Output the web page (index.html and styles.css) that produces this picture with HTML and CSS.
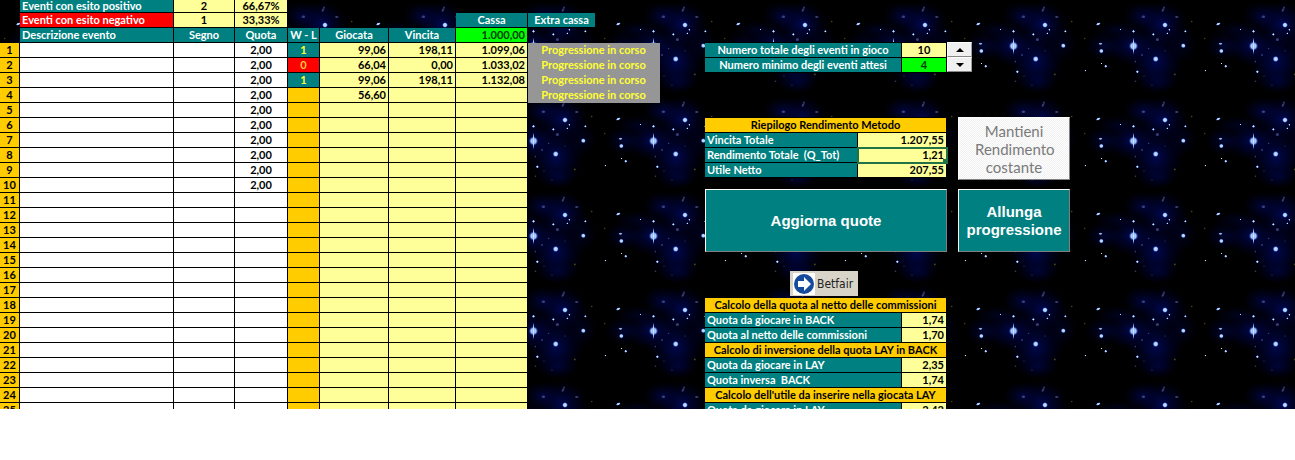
FILE: index.html
```
<!DOCTYPE html>
<html lang="it">
<head>
    <meta charset="UTF-8">
    <meta name="viewport" content="width=device-width, initial-scale=1.0">
    <title>Progressione - Eventi in gioco</title>
    <link rel="stylesheet" href="styles.css">
</head>
<body>
    <main class="sheet">
        <table class="events">
            <colgroup>
                <col class="col-num">
                <col class="col-desc">
                <col class="col-sign">
                <col class="col-odds">
                <col class="col-wl">
                <col class="col-stake">
                <col class="col-win">
                <col class="col-cash">
                <col class="col-extra">
                <col class="col-rest">
            </colgroup>
            <thead>
                <tr class="first">
                    <td class="clear"></td>
                    <th class="teal left">Eventi con esito positivo</th>
                    <td class="yellow">2</td>
                    <td class="yellow">66,67%</td>
                </tr>
                <tr>
                    <td class="clear"></td>
                    <th class="red left">Eventi con esito negativo</th>
                    <td class="yellow">1</td>
                    <td class="yellow">33,33%</td>
                    <td class="clear" colspan="3"></td>
                    <th class="teal">Cassa</th>
                    <th class="teal">Extra cassa</th>
                </tr>
                <tr>
                    <td class="clear"></td>
                    <th class="teal left">Descrizione evento</th>
                    <th class="teal">Segno</th>
                    <th class="teal">Quota</th>
                    <th class="teal">W - L</th>
                    <th class="teal">Giocata</th>
                    <th class="teal">Vincita</th>
                    <td class="green right">1.000,00</td>
                </tr>
            </thead>
            <tbody>
                <tr><th>1</th><td></td><td></td><td>2,00</td><td class="won">1</td><td>99,06</td><td>198,11</td><td>1.099,06</td><td class="status" colspan="2">Progressione in corso</td></tr>
                <tr><th>2</th><td></td><td></td><td>2,00</td><td class="lost">0</td><td>66,04</td><td>0,00</td><td>1.033,02</td><td class="status" colspan="2">Progressione in corso</td></tr>
                <tr><th>3</th><td></td><td></td><td>2,00</td><td class="won">1</td><td>99,06</td><td>198,11</td><td>1.132,08</td><td class="status" colspan="2">Progressione in corso</td></tr>
                <tr><th>4</th><td></td><td></td><td>2,00</td><td></td><td>56,60</td><td></td><td></td><td class="status" colspan="2">Progressione in corso</td></tr>
                <tr><th>5</th><td></td><td></td><td>2,00</td><td></td><td></td><td></td><td></td></tr>
                <tr><th>6</th><td></td><td></td><td>2,00</td><td></td><td></td><td></td><td></td></tr>
                <tr><th>7</th><td></td><td></td><td>2,00</td><td></td><td></td><td></td><td></td></tr>
                <tr><th>8</th><td></td><td></td><td>2,00</td><td></td><td></td><td></td><td></td></tr>
                <tr><th>9</th><td></td><td></td><td>2,00</td><td></td><td></td><td></td><td></td></tr>
                <tr><th>10</th><td></td><td></td><td>2,00</td><td></td><td></td><td></td><td></td></tr>
                <tr><th>11</th><td></td><td></td><td></td><td></td><td></td><td></td><td></td></tr>
                <tr><th>12</th><td></td><td></td><td></td><td></td><td></td><td></td><td></td></tr>
                <tr><th>13</th><td></td><td></td><td></td><td></td><td></td><td></td><td></td></tr>
                <tr><th>14</th><td></td><td></td><td></td><td></td><td></td><td></td><td></td></tr>
                <tr><th>15</th><td></td><td></td><td></td><td></td><td></td><td></td><td></td></tr>
                <tr><th>16</th><td></td><td></td><td></td><td></td><td></td><td></td><td></td></tr>
                <tr><th>17</th><td></td><td></td><td></td><td></td><td></td><td></td><td></td></tr>
                <tr><th>18</th><td></td><td></td><td></td><td></td><td></td><td></td><td></td></tr>
                <tr><th>19</th><td></td><td></td><td></td><td></td><td></td><td></td><td></td></tr>
                <tr><th>20</th><td></td><td></td><td></td><td></td><td></td><td></td><td></td></tr>
                <tr><th>21</th><td></td><td></td><td></td><td></td><td></td><td></td><td></td></tr>
                <tr><th>22</th><td></td><td></td><td></td><td></td><td></td><td></td><td></td></tr>
                <tr><th>23</th><td></td><td></td><td></td><td></td><td></td><td></td><td></td></tr>
                <tr><th>24</th><td></td><td></td><td></td><td></td><td></td><td></td><td></td></tr>
                <tr><th>25</th><td></td><td></td><td></td><td></td><td></td><td></td><td></td></tr>
            </tbody>
        </table>

        <section class="panel">
            <div class="counts">
                <table class="box">
                    <colgroup><col><col class="short"></colgroup>
                    <tr><th class="teal center">Numero totale degli eventi in gioco</th><td class="yellow center">10</td></tr>
                    <tr><th class="teal center">Numero minimo degli eventi attesi</th><td class="green center">4</td></tr>
                </table>
                <div class="spinner">
                    <button type="button" aria-label="Aumenta">
                        <svg width="8" height="4" viewBox="0 0 8 4"><path d="M4 0 L8 4 H0 Z"/></svg>
                    </button>
                    <button type="button" aria-label="Diminuisci">
                        <svg width="8" height="4" viewBox="0 0 8 4"><path d="M0 0 H8 L4 4 Z"/></svg>
                    </button>
                </div>
            </div>

            <div class="actions">
                <table class="box summary">
                    <colgroup><col><col class="long"></colgroup>
                    <tr><th class="gold" colspan="2">Riepilogo Rendimento Metodo</th></tr>
                    <tr><th class="teal">Vincita Totale</th><td class="yellow">1.207,55</td></tr>
                    <tr><th class="teal">Rendimento Totale&nbsp; (Q_Tot)</th><td class="yellow selected">1,21</td></tr>
                    <tr><th class="teal">Utile Netto</th><td class="yellow">207,55</td></tr>
                </table>
                <button type="button" class="btn btn-light">Mantieni Rendimento costante</button>
                <button type="button" class="btn">Aggiorna quote</button>
                <button type="button" class="btn">Allunga progressione</button>
            </div>

            <button type="button" class="betfair">
                <svg width="22" height="22" viewBox="0 0 22 22">
                    <rect width="22" height="22" fill="#fff"/>
                    <circle cx="11" cy="11" r="10" fill="#164a9c"/>
                    <path d="M5 8 H11 V4 L18 11 L11 18 V14 H5 Z" fill="#fff"/>
                </svg>
                Betfair
            </button>

            <table class="box">
                <colgroup><col><col class="short"></colgroup>
                <tr><th class="gold" colspan="2">Calcolo della quota al netto delle commissioni</th></tr>
                <tr><th class="teal">Quota da giocare in BACK</th><td class="yellow">1,74</td></tr>
                <tr><th class="teal">Quota al netto delle commissioni</th><td class="yellow">1,70</td></tr>
                <tr><th class="gold" colspan="2">Calcolo di inversione della quota LAY in BACK</th></tr>
                <tr><th class="teal">Quota da giocare in LAY</th><td class="yellow">2,35</td></tr>
                <tr><th class="teal">Quota inversa&nbsp; BACK</th><td class="yellow">1,74</td></tr>
                <tr><th class="gold" colspan="2">Calcolo dell'utile da inserire nella giocata LAY</th></tr>
                <tr><th class="teal">Quota da giocare in LAY</th><td class="yellow">2,42</td></tr>
            </table>
        </section>
    </main>
</body>
</html>
```
FILE: styles.css
```
* {
    margin: 0;
    padding: 0;
    box-sizing: border-box;
}

body {
    background: #fff;
    color: #000;
    font-family: Lato, "Open Sans", sans-serif;
    font-size: 11px;
    font-weight: bold;
    line-height: 14px;
}

/* night sky, repeated behind the whole sheet */
.sheet {
    display: flex;
    align-items: flex-start;
    max-height: 409px;
    overflow: hidden;
    background-color: #000;
    background-image: url("data:image/svg+xml,%3Csvg xmlns='http://www.w3.org/2000/svg' width='120' height='95'%3E%3Cdefs%3E%3CradialGradient id='n'%3E%3Cstop offset='0' stop-color='%23000a68' stop-opacity='.75'/%3E%3Cstop offset='.5' stop-color='%23000550' stop-opacity='.4'/%3E%3Cstop offset='1' stop-color='%23000030' stop-opacity='0'/%3E%3C/radialGradient%3E%3CradialGradient id='s'%3E%3Cstop offset='0' stop-color='%23d4eaff'/%3E%3Cstop offset='.55' stop-color='%239cc4ff'/%3E%3Cstop offset='1' stop-color='%232038c0' stop-opacity='0'/%3E%3C/radialGradient%3E%3C/defs%3E%3Cg fill='url(%23n)'%3E%3Cellipse cx='76' cy='62' rx='28' ry='32'/%3E%3Cellipse cx='82' cy='24' rx='26' ry='24'/%3E%3Cellipse cx='52' cy='46' rx='26' ry='20'/%3E%3Cellipse cx='62' cy='16' rx='20' ry='15' opacity='.7'/%3E%3Cellipse cx='24' cy='46' rx='20' ry='15' opacity='.6'/%3E%3Cellipse cx='38' cy='30' rx='26' ry='10' opacity='.4'/%3E%3Cellipse cx='102' cy='44' rx='16' ry='20' opacity='.4'/%3E%3Cellipse cx='78' cy='82' rx='20' ry='12' opacity='.5'/%3E%3C/g%3E%3Cg fill='url(%23s)'%3E%3Ccircle cx='53.5' cy='46' r='4.8'/%3E%3Cellipse cx='53.5' cy='46' rx='1.2' ry='9'/%3E%3Ccircle cx='75.7' cy='59' r='3.2'/%3E%3Ccircle cx='85' cy='25' r='3'/%3E%3Ccircle cx='103.3' cy='45.7' r='2.6'/%3E%3Cellipse cx='18.3' cy='24' rx='2.8' ry='1.5' transform='rotate(-25 18.3 24)'/%3E%3Cellipse cx='20.5' cy='43.7' rx='2.3' ry='1.4' opacity='.8'/%3E%3Ccircle cx='21.3' cy='51' r='2.5'/%3E%3Ccircle cx='25.7' cy='66.3' r='1.6'/%3E%3Ccircle cx='53.5' cy='31.4' r='1.6'/%3E%3Ccircle cx='73.4' cy='34.4' r='1.5'/%3E%3Ccircle cx='57.4' cy='71.7' r='1.6'/%3E%3Ccircle cx='105.4' cy='31.4' r='1.4'/%3E%3Ccircle cx='89.4' cy='29.7' r='1.2'/%3E%3Ccircle cx='87.4' cy='33.4' r='1.2'/%3E%3Ccircle cx='21.5' cy='63.5' r='.8'/%3E%3Ccircle cx='40.4' cy='29.4' r='.9'/%3E%3Ccircle cx='5.4' cy='70.6' r='1.1'/%3E%3C/g%3E%3Cg fill='%237078d0' opacity='.5'%3E%3Cellipse cx='63.4' cy='16.7' rx='1.7' ry='1.2'/%3E%3Cellipse cx='96.7' cy='17' rx='1.7' ry='1'/%3E%3Cellipse cx='83' cy='10' rx='1' ry='2' transform='rotate(30 83 10)'/%3E%3Ccircle cx='84' cy='7.5' r='.9'/%3E%3Ccircle cx='77.4' cy='39.4' r='1.5'/%3E%3Ccircle cx='62' cy='55' r='.9'/%3E%3Ccircle cx='68.6' cy='48.4' r='.7'/%3E%3Ccircle cx='55.4' cy='61.6' r='.8'/%3E%3Ccircle cx='85' cy='51' r='.6'/%3E%3Ccircle cx='55.5' cy='81.3' r='.8'/%3E%3Ccircle cx='64' cy='76' r='.6'/%3E%3Ccircle cx='72' cy='85' r='.6'/%3E%3C/g%3E%3Cg fill='%23807828' opacity='.6'%3E%3Ccircle cx='111.7' cy='21.5' r='.8'/%3E%3Ccircle cx='4.7' cy='38.5' r='.7'/%3E%3Ccircle cx='94.8' cy='74.4' r='.9'/%3E%3C/g%3E%3C/svg%3E");
}

table {
    border-collapse: separate;
    border-spacing: 0;
    table-layout: fixed;
}

th,
td {
    height: 15px;
    border-right: 1px solid #000;
    border-bottom: 1px solid #000;
    white-space: nowrap;
}

/* cell colours */
.teal {
    background: #008080;
    color: #fff;
}

.red {
    background: #f00;
    color: #fff;
}

.yellow {
    background: #ff9;
}

.green {
    background: #0f0;
    color: #063c06;
}

.gold {
    background: #fc0;
}

.clear {
    border-color: transparent;
}

/* events table */
.events {
    flex: none;
    width: 660px;
    text-align: center;
}

.col-num { width: 20px; }
.col-desc { width: 154px; }
.col-sign { width: 61px; }
.col-odds { width: 53px; }
.col-wl { width: 32px; }
.col-stake { width: 69px; }
.col-win { width: 67px; }
.col-cash { width: 72px; }
.col-extra { width: 68px; }
.col-rest { width: 64px; }

.events .first th,
.events .first td {
    height: 13px;
    line-height: 12px;
}

.events .left {
    padding-left: 2px;
    text-align: left;
}

.events .right {
    padding-right: 2px;
    text-align: right;
}

.events tbody th,
.events tbody td:nth-child(5) {
    background: #fc0;
}

.events tbody td:nth-child(2),
.events tbody td:nth-child(3),
.events tbody td:nth-child(4) {
    background: #fff;
}

.events tbody td:nth-child(n+6) {
    padding-right: 2px;
    background: #ff9;
    text-align: right;
}

.events tbody .won:nth-child(5) {
    background: #008080;
    color: #ff3;
}

.events tbody .lost:nth-child(5) {
    background: #f00;
    color: #fc3;
}

.events tbody .status:nth-child(9) {
    padding: 0;
    background: #969696;
    border-color: #969696;
    color: #ff3;
    text-align: center;
}

/* right side */
.panel {
    flex: none;
    margin-left: 45px;
    padding-top: 42px;
}

.counts {
    display: flex;
    align-items: flex-start;
    margin-bottom: 44px;
}

.box {
    width: 242px;
    text-align: right;
}

.box th {
    padding-left: 2px;
    text-align: left;
}

.box td {
    padding-right: 2px;
}

.box .gold,
.box .center {
    padding: 0;
    text-align: center;
}

.short {
    width: 45px;
}

.long {
    width: 89px;
}

.counts .box,
.summary {
    border-top: 1px solid #000;
}

.spinner {
    display: flex;
    flex-direction: column;
}

.spinner button {
    display: flex;
    align-items: center;
    justify-content: center;
    width: 25px;
    height: 15px;
    background: #f0f0f0;
    border: 1px solid;
    border-color: #fff #a0a0a0 #888 #fff;
}

/* active cell with its fill handle */
.selected {
    position: relative;
    outline: 2px solid #217346;
    outline-offset: -1px;
}

.selected::after {
    content: "";
    position: absolute;
    right: -2px;
    bottom: -2px;
    width: 5px;
    height: 5px;
    background: #217346;
}

.actions {
    display: grid;
    grid-template-columns: 242px 112px;
    grid-template-rows: 63px 63px;
    align-items: stretch;
    gap: 9px 11px;
    margin-bottom: 19px;
}

.summary {
    align-self: start;
}

.btn {
    padding: 0 4px;
    background: #008080;
    border: 1px solid;
    border-color: #fff #808080 #808080 #fff;
    color: #fff;
    font: bold 15px/18px "Liberation Sans", Arial, sans-serif;
}

.btn-light {
    padding: 0 16px;
    background: repeating-conic-gradient(#fff 0 25%, #f0f0f0 0 50%) 0 0 / 2px 2px;
    color: #7a7a7a;
    font: 15px/18px Lato, "Open Sans", sans-serif;
}

.betfair {
    display: flex;
    align-items: center;
    gap: 2px;
    width: 68px;
    height: 25px;
    margin: 0 auto 2px 85px;
    padding-left: 3px;
    background: #d8d4c8;
    border: 0;
    color: #222;
    font: 12px/16px "DejaVu Sans Condensed", "DejaVu Sans", sans-serif;
}
```
